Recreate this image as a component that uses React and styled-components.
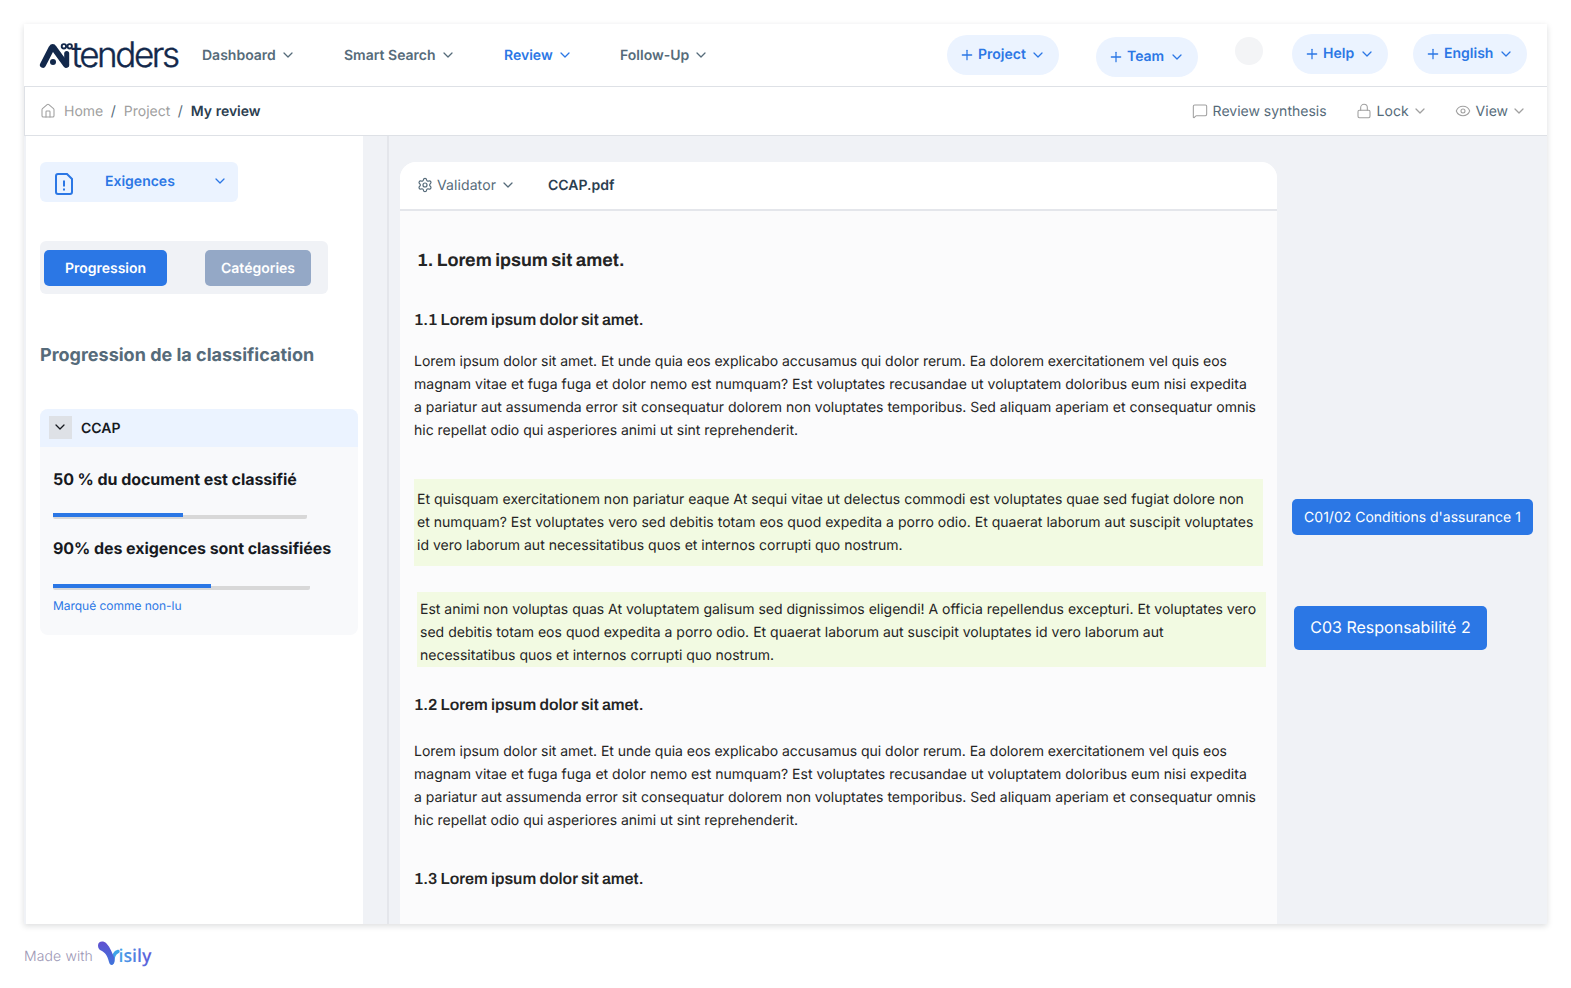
import React from 'react';
import styled, { createGlobalStyle } from 'styled-components';
import { ChevronDown, Plus, House, MessageSquare, Lock, Eye, Settings } from 'lucide-react';

const Global = createGlobalStyle`
  * { box-sizing: border-box; }
  body { margin: 0; background: #fff; font-family: Inter, "Liberation Sans", sans-serif; text-rendering: geometricPrecision; -webkit-font-smoothing: antialiased; }
  p, h1, h2, h3 { margin: 0; }
  button { font-family: inherit; border: 0; padding: 0; text-rendering: inherit; }
`;

const Page = styled.div`
  width: 1571px;
  height: 988px;
  padding: 24px 24px 0;
  overflow: hidden;
`;
const Frame = styled.div`
  width: 1523px;
  height: 900px;
  display: flex;
  flex-direction: column;
  background: #f0f2f6;
  box-shadow: 0 2px 6px rgba(23, 26, 31, 0.15);
`;
const TopBar = styled.header`
  height: 63px;
  flex: none;
  display: flex;
  align-items: flex-start;
  background: #fff;
  border-bottom: 1px solid #dee1e6;
`;
const Logo = styled.svg`
  width: 148px;
  height: 54px;
  flex: none;
  margin: 4px 0 0 12px;
`;
const Nav = styled.nav`
  display: flex;
  flex: 1;
  margin: 20px 0 0 18px;
`;
const NavItem = styled.a`
  width: ${(p) => p.$w}px;
  display: flex;
  align-items: center;
  gap: 4px;
  height: 22px;
  font-size: 14px;
  font-weight: 600;
  white-space: nowrap;
  color: ${(p) => (p.$active ? '#2b77e5' : '#566b7a')};
`;
const Actions = styled.div`
  display: flex;
  align-items: flex-start;
  margin-right: 20px;
`;
const Pill = styled.button`
  width: ${(p) => p.$w}px;
  height: 40px;
  margin: ${(p) => p.$top}px 0 0 ${(p) => p.$gap}px;
  padding: 0 13px 0 12px;
  display: flex;
  align-items: center;
  border-radius: 20px;
  background: #ebf3ff;
  color: #2b77e5;
  font-size: 14px;
  font-weight: 600;
`;
const PillLabel = styled.span`
  flex: 1;
  margin: -1px 0 0 3px;
  text-align: left;
`;
const Avatar = styled.div`
  width: 28px;
  height: 28px;
  margin: 13px 0 0 37px;
  border-radius: 50%;
  background: #f3f4f6;
`;
const SubBar = styled.div`
  height: 49px;
  flex: none;
  display: flex;
  align-items: center;
  justify-content: space-between;
  padding: 0 20px 0 15px;
  background: #fff;
  border-left: 1px solid #dee1e6;
  border-bottom: 1px solid #dee1e6;
  font-size: 14px;
`;
const Crumbs = styled.div`
  display: flex;
  align-items: center;
  color: #a0a0a0;
  svg { margin-right: 8px; }
`;
const Slash = styled.span`
  margin: 0 8px 0 7.5px;
  color: #566b7a;
`;
const Current = styled.span`
  font-weight: 600;
  color: #2c3e50;
`;
const Tools = styled.div`
  display: flex;
  gap: 27px;
`;
const Tool = styled.div`
  display: flex;
  align-items: center;
  color: #566b7a;
  &:first-child { margin-right: 2px; }
  svg { color: #a0a0a0; }
  svg:first-child { margin-right: 5px; }
  svg:last-child:not(:first-child) { margin-left: 3px; }
`;
const Body = styled.div`
  flex: 1;
  display: flex;
  min-height: 0;
`;
const Sidebar = styled.aside`
  width: 337px;
  margin-left: 2px;
  padding: 26px 0 0 14px;
  background: #fff;
`;
const TypeSelect = styled.button`
  width: 198px;
  height: 40px;
  padding: 0 10px 0 12px;
  display: flex;
  align-items: center;
  border-radius: 6px;
  background: #ebf3ff;
  color: #2b77e5;
  font-size: 14px;
  font-weight: 600;
  svg:first-child { margin-top: 4px; }
  svg:last-child { margin-top: -3px; }
`;
const TypeLabel = styled.span`
  flex: 1;
  margin: -2px 0 0 29px;
  text-align: left;
`;
const Tabs = styled.div`
  width: 288px;
  height: 53px;
  margin-top: 39px;
  padding: 9px 17px 8px 4px;
  display: flex;
  justify-content: space-between;
  border-radius: 6px;
  background: #f0f2f6;
`;
const Tab = styled.button`
  width: ${(p) => p.$w}px;
  height: 36px;
  border-radius: 5px;
  background: ${(p) => (p.$active ? '#2b77e5' : '#94a8c6')};
  color: #fff;
  font-size: 14px;
  font-weight: 600;
`;
const SideTitle = styled.h2`
  margin-top: 48px;
  font-size: 18px;
  line-height: 28px;
  font-weight: 700;
  color: #566b7a;
  white-space: nowrap;
`;
const Card = styled.section`
  width: 318px;
  height: 226px;
  margin-top: 39px;
  border-radius: 8px;
  overflow: hidden;
  background: #f8f9fb;
`;
const CardHead = styled.div`
  height: 38px;
  padding-left: 9px;
  display: flex;
  align-items: center;
  gap: 9px;
  background: #ebf3ff;
  color: #171a1f;
  font-size: 14px;
  font-weight: 600;
`;
const Toggle = styled.span`
  width: 23px;
  height: 23px;
  margin-top: -2px;
  padding: 0 1px 1px 0;
  display: flex;
  align-items: center;
  justify-content: center;
  background: #dee1e6;
`;
const CardBody = styled.div`
  padding: 19px 0 0 13px;
`;
const Stat = styled.p`
  font-size: 16px;
  line-height: 26px;
  font-weight: 700;
  letter-spacing: -0.06px;
  color: #171a1f;
  white-space: nowrap;
`;
const Track = styled.div`
  width: ${(p) => p.$w}px;
  height: 6px;
  margin: ${(p) => p.$m};
  border-radius: 2px;
  background: linear-gradient(transparent 2px, #d8d8d8 2px);
`;
const Fill = styled.div`
  height: 4px;
  background: #2b77e5;
`;
const Unread = styled.a`
  display: block;
  font-size: 12px;
  line-height: 20px;
  letter-spacing: -0.03px;
  color: #2b77e5;
`;
const Divider = styled.div`
  width: 2px;
  margin: 0 11px 0 24px;
  background: #e4e6eb;
`;
const Doc = styled.main`
  width: 877px;
  margin-top: 26px;
  border-radius: 16px 16px 0 0;
  background: #fbfbfc;
  overflow: hidden;
`;
const DocHead = styled.div`
  height: 49px;
  padding: 0 17px 1px;
  display: flex;
  align-items: center;
  background: #fff;
  border-bottom: 2px solid #e4e6eb;
  font-size: 14px;
  color: #566b7a;
`;
const Validator = styled.div`
  display: flex;
  align-items: center;
  gap: 4px;
  width: 131px;
  letter-spacing: 0.1px;
`;
const FileName = styled.span`
  font-weight: 600;
  color: #2c3e50;
`;
const Content = styled.article`
  padding: 34px 0 0 14px;
  color: #242424;
`;
const Title = styled.h1`
  margin-left: 3px;
  font: 700 18px/30px Archivo, "Liberation Sans", sans-serif;
`;
const Heading = styled.h2`
  margin-top: ${(p) => p.$top}px;
  font: 600 16px/26px Archivo, "Liberation Sans", sans-serif;
  letter-spacing: 0.02px;
`;
const Para = styled.p`
  margin-top: ${(p) => p.$top}px;
  font-size: 14px;
  line-height: 23px;
  white-space: nowrap;
`;
const Line = styled.span`
  display: block;
  letter-spacing: ${(p) => p.$track}px;
`;
const Mark = styled.div`
  width: 849px;
  height: ${(p) => p.$h}px;
  margin: ${(p) => p.$m};
  padding: ${(p) => p.$pad}px 0 0 3px;
  background: #f2fae2;
`;
const Notes = styled.aside`
  padding: 363px 0 0 15px;
`;
const Note = styled.div`
  width: ${(p) => p.$w}px;
  height: ${(p) => p.$h}px;
  margin: ${(p) => p.$m};
  padding-bottom: ${(p) => p.$lift || 0}px;
  display: flex;
  align-items: center;
  justify-content: center;
  border-radius: 5px;
  background: #2b77e5;
  color: #fff;
  font-size: ${(p) => p.$size}px;
  white-space: nowrap;
`;
const Footer = styled.footer`
  display: flex;
  align-items: center;
  height: 40px;
  margin-top: 10px;
  font-size: 14px;
  color: #9c97b5;
`;
const MadeWith = styled.span`
  font-weight: 300;
  letter-spacing: 0.12px;
  margin-top: 4px;
  width: 72px;
`;

const Chevron = (p) => <ChevronDown size={16} strokeWidth={1.9} {...p} />;

const LOREM = [
  ['Lorem ipsum dolor sit amet. Et unde quia eos explicabo accusamus qui dolor rerum. Ea dolorem exercitationem vel quis eos', -0.026],
  ['magnam vitae et fuga fuga et dolor nemo est numquam? Est voluptates recusandae ut voluptatem doloribus eum nisi expedita', 0.004],
  ['a pariatur aut assumenda error sit consequatur dolorem non voluptates temporibus. Sed aliquam aperiam et consequatur omnis', -0.01],
  ['hic repellat odio qui asperiores animi ut sint reprehenderit.', -0.012],
];
const MARK_ONE = [
  ['Et quisquam exercitationem non pariatur eaque At sequi vitae ut delectus commodi est voluptates quae sed fugiat dolore non', 0.004],
  ['et numquam? Est voluptates vero sed debitis totam eos quod expedita a porro odio. Et quaerat laborum aut suscipit voluptates', 0.022],
  ['id vero laborum aut necessitatibus quos et internos corrupti quo nostrum.', 0],
];
const MARK_TWO = [
  ['Est animi non voluptas quas At voluptatem galisum sed dignissimos eligendi! A officia repellendus excepturi. Et voluptates vero', -0.011],
  ['sed debitis totam eos quod expedita a porro odio. Et quaerat laborum aut suscipit voluptates id vero laborum aut', 0.018],
  ['necessitatibus quos et internos corrupti quo nostrum.', 0],
];

function Text({ lines, top = 0 }) {
  return (
    <Para $top={top}>
      {lines.map(([text, track]) => <Line key={text} $track={track}>{text}</Line>)}
    </Para>
  );
}

function AddPill({ label, w, top, gap }) {
  return (
    <Pill $w={w} $top={top} $gap={gap}>
      <Plus size={16} strokeWidth={1.9} />
      <PillLabel>{label}</PillLabel>
      <Chevron />
    </Pill>
  );
}

function AitendersLogo() {
  return (
    <Logo viewBox="36 28 148 54">
      <g fill="none" stroke="#12284b" strokeLinecap="round" strokeLinejoin="round">
        <path d="M42.9 64.8 L51.6 48 Q52.7 46.2 53.8 48 L66 64.8" strokeWidth="6" />
        <path d="M66.7 53.5 V65" strokeWidth="5" />
        <circle cx="63.9" cy="46.3" r="2.2" strokeWidth="1.9" />
        <circle cx="69.7" cy="46.3" r="2.2" strokeWidth="1.9" />
      </g>
      <circle cx="53" cy="62" r="3" fill="#12284b" />
      <text x="71.5" y="67.2" fontFamily="Inter, sans-serif" fontWeight="300" fontSize="35" fill="#12284b" stroke="#12284b" strokeWidth=".4" textLength="108.5" lengthAdjust="spacing">tenders</text>
    </Logo>
  );
}

function VisilyLogo() {
  return (
    <svg width="58" height="32" viewBox="96 938 58 32">
      <defs>
        <linearGradient id="v" x1="0" y1="0" x2="0" y2="1">
          <stop offset="0" stopColor="#6150d0" />
          <stop offset="1" stopColor="#3f74dc" />
        </linearGradient>
        <linearGradient id="t" x1="0" y1="0" x2="1" y2="0">
          <stop offset="0" stopColor="#45a5ea" />
          <stop offset="1" stopColor="#6158d8" />
        </linearGradient>
      </defs>
      <path d="M112.5 962 C113 956 114 952.5 118 951.5" fill="none" stroke="#3fa4e8" strokeWidth="3.4" strokeLinecap="round" />
      <path d="M98 945.5 C98 941 103.5 940.5 106.5 943.5 C110.5 947.5 112 953 114.5 958 C115.5 966 110 967 109 962 C107.5 955.5 105 952.5 101 950.5 Q98 949 98 945.5Z" fill="url(#v)" />
      <text x="118.5" y="962" fontFamily="Open Sans, sans-serif" fontWeight="600" fontSize="18" fill="url(#t)" textLength="33" lengthAdjust="spacingAndGlyphs">isily</text>
    </svg>
  );
}

function FileAlert() {
  return (
    <svg width="24" height="24" viewBox="0 0 24 24" fill="none" stroke="currentColor" strokeWidth="2">
      <path d="M6 2h9l5 5v13a2 2 0 0 1-2 2H6a2 2 0 0 1-2-2V4a2 2 0 0 1 2-2z" />
      <path d="M12 8.5v6M12 16.5v2" />
    </svg>
  );
}

export default function App() {
  return (
    <Page>
      <Global />
      <Frame>
        <TopBar>
          <AitendersLogo />
          <Nav>
            <NavItem $w={142}>Dashboard <Chevron /></NavItem>
            <NavItem $w={160}>Smart Search <Chevron /></NavItem>
            <NavItem $w={116} $active>Review <Chevron /></NavItem>
            <NavItem $w={100}>Follow-Up <Chevron /></NavItem>
          </Nav>
          <Actions>
            <AddPill label="Project" w={112} top={11} gap={0} />
            <AddPill label="Team" w={102} top={13} gap={37} />
            <Avatar />
            <AddPill label="Help" w={96} top={10} gap={29} />
            <AddPill label="English" w={114} top={10} gap={25} />
          </Actions>
        </TopBar>
        <SubBar>
          <Crumbs>
            <House size={16} strokeWidth={1.6} />
            Home<Slash>/</Slash>Project<Slash>/</Slash><Current>My review</Current>
          </Crumbs>
          <Tools>
            <Tool><MessageSquare size={16} strokeWidth={1.6} />Review synthesis</Tool>
            <Tool><Lock size={16} strokeWidth={1.6} />Lock <Chevron /></Tool>
            <Tool><Eye size={16} strokeWidth={1.6} />View <Chevron /></Tool>
          </Tools>
        </SubBar>
        <Body>
          <Sidebar>
            <TypeSelect>
              <FileAlert />
              <TypeLabel>Exigences</TypeLabel>
              <Chevron />
            </TypeSelect>
            <Tabs>
              <Tab $w={123} $active>Progression</Tab>
              <Tab $w={106}>Catégories</Tab>
            </Tabs>
            <SideTitle>Progression de la classification</SideTitle>
            <Card>
              <CardHead><Toggle><Chevron /></Toggle>CCAP</CardHead>
              <CardBody>
                <Stat>50 % du document est classifié</Stat>
                <Track $w={254} $m="21px 0 16px"><Fill style={{ width: 130 }} /></Track>
                <Stat>90% des exigences sont classifiées</Stat>
                <Track $w={257} $m="23px 0 6px"><Fill style={{ width: 158 }} /></Track>
                <Unread>Marqué comme non-lu</Unread>
              </CardBody>
            </Card>
          </Sidebar>
          <Divider />
          <Doc>
            <DocHead>
              <Validator><Settings size={16} strokeWidth={1.8} />Validator <Chevron /></Validator>
              <FileName>CCAP.pdf</FileName>
            </DocHead>
            <Content>
              <Title>1. Lorem ipsum sit amet.</Title>
              <Heading $top={33}>1.1 Lorem ipsum dolor sit amet.</Heading>
              <Text top={16} lines={LOREM} />
              <Mark $h={87} $m="37px 0 0" $pad={9}><Text lines={MARK_ONE} /></Mark>
              <Mark $h={75} $m="26px 0 0 3px" $pad={6}><Text lines={MARK_TWO} /></Mark>
              <Heading $top={26}>1.2 Lorem ipsum dolor sit amet.</Heading>
              <Text top={21} lines={LOREM} />
              <Heading $top={35}>1.3 Lorem ipsum dolor sit amet.</Heading>
            </Content>
          </Doc>
          <Notes>
            <Note $w={241} $h={36} $size={14} $m="0">C01/02 Conditions d'assurance 1</Note>
            <Note $w={193} $h={44} $size={16} $lift={2} $m="71px 0 0 2px">C03 Responsabilité 2</Note>
          </Notes>
        </Body>
      </Frame>
      <Footer><MadeWith>Made with</MadeWith><VisilyLogo /></Footer>
    </Page>
  );
}
